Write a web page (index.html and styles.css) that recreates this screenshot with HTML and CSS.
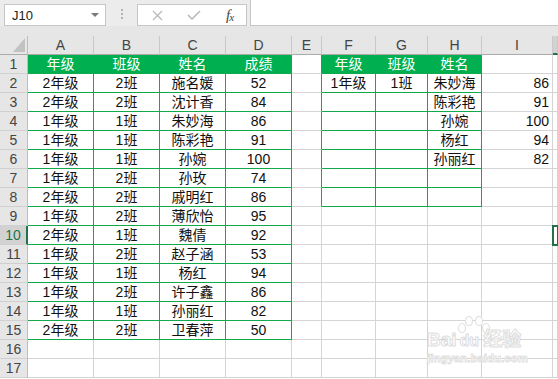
FILE: index.html
```html
<!DOCTYPE html>
<html lang="zh-CN">
<head>
  <meta charset="UTF-8" />
  <title>成绩表</title>
  <link rel="stylesheet" href="styles.css">
</head>
<body>

  <div class="formula-bar">
    <div class="name-box">
      <span>J10</span>
      <svg class="drop" width="8" height="5" viewBox="0 0 8 5"><polygon points="0,0 8,0 4,4" fill="#7a7a7a"/></svg>
    </div>
    <div class="dots"><i></i><i></i><i></i></div>
    <div class="fx-buttons">
      <svg class="btn-cancel" width="11" height="11" viewBox="0 0 11 11">
        <path d="M1 1 L10 10 M10 1 L1 10" stroke="#b9b9b9" stroke-width="1.3" fill="none"/>
      </svg>
      <svg class="btn-ok" width="14" height="10" viewBox="0 0 14 10">
        <path d="M1 5 L5 9 L13 1" stroke="#b9b9b9" stroke-width="1.6" fill="none"/>
      </svg>
      <span class="fx">f<sub>x</sub></span>
    </div>
    <div class="formula-input"></div>
  </div>

  <div class="band"></div>

  <div class="sheet" id="sheet"></div>

  <div class="watermark">
    <svg class="paw" width="36" height="30" viewBox="0 0 36 30">
      <g fill="#fff" stroke="#e0e0e0" stroke-width="1.2">
        <ellipse cx="6" cy="12" rx="3.5" ry="4.5"/>
        <ellipse cx="13" cy="5" rx="3.5" ry="4.5"/>
        <ellipse cx="23" cy="5" rx="3.5" ry="4.5"/>
        <ellipse cx="30" cy="12" rx="3.5" ry="4.5"/>
      </g>
    </svg>
    <div class="wm-logo">Bai<span class="du">du</span>经验</div>
    <div class="wm-url">jingyan.baidu.com</div>
  </div>

  <script>
    const columns = ['A', 'B', 'C', 'D', 'E', 'F', 'G', 'H', 'I', 'J'];

    const scores = [
      ['年级', '班级', '姓名', '成绩'],
      ['2年级', '2班', '施名媛', '52'],
      ['2年级', '2班', '沈计香', '84'],
      ['1年级', '1班', '朱妙海', '86'],
      ['1年级', '1班', '陈彩艳', '91'],
      ['1年级', '1班', '孙婉', '100'],
      ['1年级', '2班', '孙玫', '74'],
      ['2年级', '2班', '戚明红', '86'],
      ['1年级', '2班', '薄欣怡', '95'],
      ['2年级', '1班', '魏倩', '92'],
      ['1年级', '2班', '赵子涵', '53'],
      ['1年级', '1班', '杨红', '94'],
      ['1年级', '2班', '许子鑫', '86'],
      ['1年级', '1班', '孙丽红', '82'],
      ['2年级', '2班', '卫春萍', '50']
    ];

    const cells = {
      F1: '年级', G1: '班级', H1: '姓名',
      F2: '1年级', G2: '1班', H2: '朱妙海',
      H3: '陈彩艳', H4: '孙婉', H5: '杨红', H6: '孙丽红',
      I2: '86', I3: '91', I4: '100', I5: '94', I6: '82'
    };

    scores.forEach((row, r) => {
      row.forEach((value, c) => {
        cells[columns[c] + (r + 1)] = value;
      });
    });

    function classesFor(col, row) {
      const list = ['cell'];
      const ci = columns.indexOf(col);
      if (ci <= 3 && row <= 15) list.push('tbl');
      if (ci >= 5 && ci <= 7 && row <= 8) list.push('tbl');
      if (col === 'E' && row <= 8) list.push('edge');
      if (row === 1 && (ci <= 3 || (ci >= 5 && ci <= 7))) list.push('head');
      if (col === 'I') list.push('right');
      if (col === 'J' && row === 10) list.push('active');
      return list.join(' ');
    }

    function buildSheet() {
      const sheet = document.getElementById('sheet');
      let html = '<div class="cell corner"><svg width="12" height="14" viewBox="0 0 12 14"><polygon points="12,0 12,14 0,14" fill="#c2c2c2"/></svg></div>';

      columns.forEach(col => {
        html += `<div class="cell col-head${col === 'J' ? ' sel' : ''}">${col === 'J' ? '' : col}</div>`;
      });

      for (let row = 1; row <= 17; row++) {
        html += `<div class="cell row-head${row === 10 ? ' sel' : ''}">${row}</div>`;
        columns.forEach(col => {
          html += `<div class="${classesFor(col, row)}">${cells[col + row] || ''}</div>`;
        });
      }

      sheet.innerHTML = html;
    }

    buildSheet();
  </script>

</body>
</html>
```

FILE: styles.css
```css
body {
  margin: 0;
  width: 558px;
  height: 379px;
  overflow: hidden;
  background: #fff;
  font-family: "Liberation Sans", "Noto Sans CJK SC", sans-serif;
  position: relative;
}

.formula-bar {
  display: flex;
  align-items: flex-start;
  height: 26px;
  background: #ececec;
}

.name-box {
  box-sizing: border-box;
  display: flex;
  align-items: center;
  justify-content: space-between;
  margin: 4px 0 0 4px;
  width: 102px;
  height: 22px;
  padding: 0 6px 0 7px;
  background: #fff;
  border: 1px solid #c6c6c6;
  font-size: 13px;
  color: #222;
}

.dots {
  display: flex;
  flex-direction: column;
  gap: 2px;
  margin: 9px 0 0 15px;
}

.dots i {
  display: block;
  width: 2px;
  height: 2px;
  background: #b3b3b3;
}

.fx-buttons {
  box-sizing: border-box;
  display: flex;
  align-items: center;
  margin: 4px 0 0 14px;
  width: 110px;
  height: 22px;
  padding-left: 14px;
  background: #fff;
  border: 1px solid #c6c6c6;
}

.btn-ok {
  margin-left: 24px;
}

.fx {
  margin-left: 25px;
  font-family: "Liberation Serif", serif;
  font-style: italic;
  font-size: 15px;
  color: #444;
  letter-spacing: -1px;
}

.fx sub {
  font-size: 11px;
  vertical-align: -1px;
}

.formula-input {
  flex: 1;
  box-sizing: border-box;
  margin-left: 3px;
  height: 26px;
  background: #fff;
  border-left: 1px solid #c6c6c6;
  border-bottom: 1px solid #c6c6c6;
}

.band {
  height: 10px;
  background: #e6e6e6;
}

.sheet {
  display: grid;
  grid-template-columns: 28px 66px 66px 66px 66px 30px 54px 52px 54px 71px 1fr;
  grid-auto-rows: 19px;
}

.cell {
  box-sizing: border-box;
  display: flex;
  align-items: center;
  justify-content: center;
  border-right: 1px solid #d4d4d4;
  border-bottom: 1px solid #d4d4d4;
  font-size: 14px;
  line-height: 18px;
  color: #111;
  white-space: nowrap;
  overflow: hidden;
}

.corner {
  justify-content: flex-end;
  align-items: flex-end;
  padding: 0 2px 2px 0;
  background: #e6e6e6;
  border-right-color: #bdbdbd;
  border-bottom-color: #ababab;
}

.col-head {
  background: #e6e6e6;
  border-right-color: #c9c9c9;
  border-bottom-color: #ababab;
  color: #444;
  font-size: 14px;
}

.col-head.sel {
  background: #d2d2d2;
  border-bottom: 2px solid #217346;
}

.row-head {
  background: #e6e6e6;
  border-right-color: #bdbdbd;
  border-bottom-color: #d0d0d0;
  color: #444;
}

.row-head.sel {
  background: #d2d2d2;
  color: #217346;
  border-right: 2px solid #217346;
}

.tbl {
  border-right-color: #12a84c;
  border-bottom-color: #12a84c;
}

.edge {
  border-right-color: #12a84c;
}

.head {
  background: #00b050;
  color: #fff;
}

.right {
  justify-content: flex-end;
  padding-right: 3px;
}

.active {
  position: relative;
  z-index: 1;
  outline: 2px solid #217346;
  outline-offset: -1px;
}

.watermark {
  position: absolute;
  left: 427px;
  top: 316px;
  width: 100px;
  pointer-events: none;
  z-index: 2;
}

.paw {
  display: block;
  margin-left: 29px;
}

.wm-logo {
  margin-top: -16px;
  font-size: 19px;
  font-weight: bold;
  line-height: 20px;
  color: #fff;
  -webkit-text-stroke: 1px #dedede;
}

.wm-logo .du {
  margin: 0 4px 0 3px;
  font-size: 16px;
}

.wm-url {
  font-size: 11.5px;
  font-weight: bold;
  line-height: 14px;
  color: #fff;
  -webkit-text-stroke: 0.8px #dedede;
}
```
